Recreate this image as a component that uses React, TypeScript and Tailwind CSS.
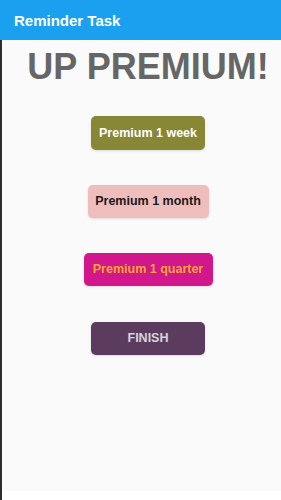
import React from "react";

export default function App() {
  const font = { fontFamily: '"Liberation Sans", Arial, sans-serif' };
  return (
    <div className="w-[281px] h-[500px] flex flex-col bg-white overflow-hidden" style={font}>
      <div className="h-[40px] bg-[#1ba0f0] flex items-center pl-[14px] shrink-0">
        <span className="text-white font-bold text-[15px] leading-none">Reminder Task</span>
      </div>
      <div className="flex flex-1">
        <div className="w-[2px] bg-[#2e2e2e] shrink-0" />
        <div className="flex-1 flex flex-col">
          <div className="h-[451px] bg-[#fafafa] flex flex-col items-center pl-[13px]">
            <div className="mt-[6px] text-[36px] font-bold text-[#666666] leading-[42px]">UP PREMIUM!</div>
            <button className="mt-[28px] w-[114px] h-[34px] rounded-[5px] bg-[#878735] text-white font-bold text-[12.5px] shadow-sm">
              Premium 1 week
            </button>
            <button className="mt-[35px] w-[121px] h-[33px] rounded-[5px] bg-[#f0bdbd] text-[#1a1a1a] font-bold text-[12.5px] shadow-sm">
              Premium 1 month
            </button>
            <button className="mt-[35px] w-[129px] h-[33px] rounded-[5px] bg-[#d2168b] text-[#f6a62e] font-bold text-[12.5px] shadow-sm">
              Premium 1 quarter
            </button>
            <button className="mt-[36px] w-[114px] h-[33px] rounded-[5px] bg-[#5b3c5e] text-[#d4d4de] font-bold text-[12.5px] shadow-sm">
              FINISH
            </button>
          </div>
          <div className="flex-1 bg-white" />
        </div>
      </div>
    </div>
  );
}
